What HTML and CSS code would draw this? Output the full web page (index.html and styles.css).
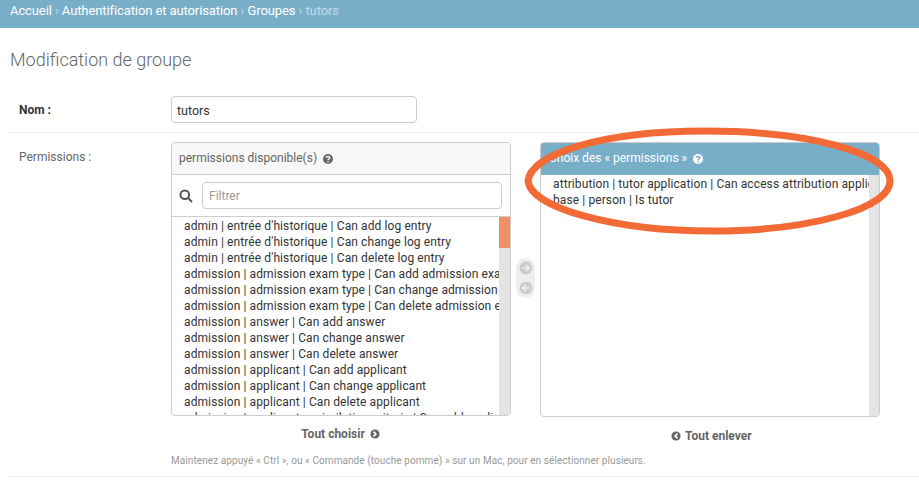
FILE: index.html
```html
<!DOCTYPE html>
<html>
	<head>
		<meta charset="utf-8">
		<title>Modification de groupe</title>
		<link rel="stylesheet" href="styles.css">
	</head>
	<body>
		<div class="breadcrumbs">
			<a>Accueil</a> › <a>Authentification et autorisation</a> › <a>Groupes</a> › tutors
		</div>
		<div class="content">
			<h1>Modification de groupe</h1>
			<div class="form-row">
				<label class="required">Nom :</label>
				<input class="name-input" type="text" value="tutors">
			</div>
			<div class="form-row perm-row">
				<label>Permissions :</label>
				<div class="field">
					<div class="selector">
						<div class="side">
							<div class="box">
								<div class="box-title">permissions disponible(s)
									<svg class="help" viewBox="0 0 12 12"><circle cx="6" cy="6" r="5"/><path d="M4.2 4.8C4.3 2.9 7.8 2.9 7.8 4.8 7.8 6 6 5.9 6 7.2M6 8.2V9.6"/></svg>
								</div>
								<div class="filter">
									<svg class="search" viewBox="0 0 14 14"><circle cx="5.8" cy="5.8" r="4.3"/><path d="M9 9l4 4"/></svg>
									<input class="filter-input" type="text" placeholder="Filtrer">
								</div>
								<div class="list list-left">
									<div class="rows">
										<div>admin | entrée d'historique | Can add log entry</div>
										<div>admin | entrée d'historique | Can change log entry</div>
										<div>admin | entrée d'historique | Can delete log entry</div>
										<div>admission | admission exam type | Can add admission exam type</div>
										<div>admission | admission exam type | Can change admission exam type</div>
										<div>admission | admission exam type | Can delete admission exam type</div>
										<div>admission | answer | Can add answer</div>
										<div>admission | answer | Can change answer</div>
										<div>admission | answer | Can delete answer</div>
										<div>admission | applicant | Can add applicant</div>
										<div>admission | applicant | Can change applicant</div>
										<div>admission | applicant | Can delete applicant</div>
										<div>admission | applicant assimilation criteria | Can add applicant</div>
									</div>
									<div class="scrollbar"><div class="thumb"></div></div>
								</div>
							</div>
							<div class="choose-all">Tout choisir
								<svg class="round-icon" viewBox="0 0 12 12"><circle cx="6" cy="6" r="5.5"/><path d="M4.2 3.2L7 6 4.2 8.8"/></svg>
							</div>
						</div>
						<div class="chooser">
							<svg viewBox="0 0 14 14"><circle cx="7" cy="7" r="6.5"/><path d="M3.5 7H10M7 3.8L10.2 7 7 10.2"/></svg>
							<svg viewBox="0 0 14 14"><circle cx="7" cy="7" r="6.5"/><path d="M10.5 7H4M7 3.8L3.8 7 7 10.2"/></svg>
						</div>
						<div class="side">
							<div class="box box-chosen">
								<div class="box-title title-chosen">Choix des « permissions »
									<svg class="help help-white" viewBox="0 0 12 12"><circle cx="6" cy="6" r="5"/><path d="M4.2 4.8C4.3 2.9 7.8 2.9 7.8 4.8 7.8 6 6 5.9 6 7.2M6 8.2V9.6"/></svg>
								</div>
								<div class="list list-right">
									<div class="rows">
										<div>attribution | tutor application | Can access attribution application</div>
										<div>base | person | Is tutor</div>
									</div>
									<div class="scrollbar"></div>
								</div>
							</div>
							<div class="choose-all remove-all">
								<svg class="round-icon" viewBox="0 0 12 12"><circle cx="6" cy="6" r="5.5"/><path d="M7.8 3.2L5 6 7.8 8.8"/></svg>
								Tout enlever
							</div>
						</div>
					</div>
					<p class="help-text">Maintenez appuyé « Ctrl », ou « Commande (touche pomme) » sur un Mac, pour en sélectionner plusieurs.</p>
				</div>
			</div>
		</div>
		<!-- annotation drawn over the screenshot -->
		<svg class="annotation" viewBox="0 0 919 493">
			<path d="M528 181C531 154 602 131 705 131 808 131 890 153 890 181 890 209 808 231 712 231 615 231 531 208 528 181Z"/>
		</svg>
	</body>
</html>
```

FILE: styles.css
```css
* {
	margin: 0;
	padding: 0;
	box-sizing: border-box;
}
html, body {
	height: 493px;
	overflow: hidden;
}
body {
	font-family: Roboto, "Liberation Sans", sans-serif;
	font-size: 12px;
	color: #333;
	background: #fff;
}
.breadcrumbs {
	height: 28px;
	padding: 0 10px;
	background: #79aec8;
	color: #c4dce8;
	font-size: 13px;
	letter-spacing: -0.1px;
	line-height: 21px;
}
.breadcrumbs a {
	color: #fff;
}
.content {
	padding-left: 10px;
}
h1 {
	height: 58px;
	padding-top: 20px;
	font-size: 18px;
	line-height: 24px;
	font-weight: 300;
	color: #666;
}
.form-row {
	display: flex;
	padding: 10px 0 9px 9px;
	border-bottom: 1px solid #eee;
}
.perm-row {
	padding-top: 9px;
	padding-bottom: 8px;
}
.form-row label {
	width: 152px;
	height: 27px;
	flex: none;
	color: #666;
	font-size: 12px;
	line-height: 29px;
}
.form-row label.required {
	color: #333;
	font-weight: bold;
}
.perm-row label {
	line-height: 30px;
}
input {
	font-family: inherit;
	border: 1px solid #ccc;
	border-radius: 4px;
	background: #fff;
}
.name-input {
	width: 246px;
	height: 27px;
	padding: 2px 5px 0;
	font-size: 12.5px;
	color: #333;
}
.selector {
	display: flex;
}
.side {
	width: 340px;
	flex: none;
}
.box {
	height: 274px;
	display: flex;
	flex-direction: column;
	border: 1px solid #ccc;
	border-radius: 4px;
	overflow: hidden;
}
.box-chosen {
	height: 275px;
}
.box-title {
	height: 32px;
	flex: none;
	padding-left: 7px;
	background: #f8f8f8;
	border-bottom: 1px solid #ccc;
	color: #666;
	font-size: 12px;
	line-height: 31px;
}
.title-chosen {
	background: #79aec8;
	border-bottom: none;
	color: #fff;
	padding-left: 8px;
}
.help {
	width: 12px;
	height: 12px;
	margin-left: 2px;
	vertical-align: -3px;
}
.help circle {
	fill: #666;
}
.help path {
	fill: none;
	stroke: #f8f8f8;
	stroke-width: 1.5;
}
.help-white circle {
	fill: #fff;
}
.help-white path {
	stroke: #79aec8;
}
.filter {
	height: 42px;
	flex: none;
	display: flex;
	align-items: center;
	padding: 0 8px 0 7px;
	border-bottom: 1px solid #ccc;
}
.search {
	width: 14px;
	height: 14px;
	margin-right: 9px;
	flex: none;
}
.search circle, .search path {
	fill: none;
	stroke: #555;
	stroke-width: 2;
}
.filter-input {
	flex: 1;
	height: 27px;
	padding: 0 6px;
	font-size: 12px;
}
.filter-input::placeholder {
	color: #999;
}
.list {
	flex: 1;
	display: flex;
	min-height: 0;
}
.rows {
	flex: 1;
	min-width: 0;
	overflow: hidden;
	white-space: nowrap;
	padding: 1px 0 0 12px;
	font-size: 12px;
	letter-spacing: 0.1px;
	line-height: 16px;
}
.scrollbar {
	width: 11px;
	flex: none;
	background: #e4e4e4;
}
.list-right .scrollbar {
	width: 10px;
}
.thumb {
	height: 31px;
	background: #f08f68;
}
.choose-all {
	padding-top: 10px;
	text-align: center;
	color: #666;
	font-size: 12px;
	font-weight: bold;
	line-height: 16px;
}
.remove-all {
	padding: 11px 0 0 2px;
}
.round-icon {
	width: 10px;
	height: 10px;
	margin: 0 1px 0 2px;
	vertical-align: -1px;
}
.remove-all .round-icon {
	margin: 0 1px;
}
.round-icon circle {
	fill: #666;
}
.round-icon path {
	fill: none;
	stroke: #fff;
	stroke-width: 2;
}
.chooser {
	width: 19px;
	height: 40px;
	margin: 116px 5px 0;
	flex: none;
	display: flex;
	flex-direction: column;
	align-items: center;
	justify-content: space-around;
	background: #eee;
	border-radius: 10px;
}
.chooser svg {
	width: 14px;
	height: 14px;
}
.chooser circle {
	fill: #ccc;
}
.chooser path {
	fill: none;
	stroke: #eee;
	stroke-width: 1.6;
}
.help-text {
	padding-top: 9px;
	font-size: 10px;
	letter-spacing: 0.08px;
	line-height: 15px;
	color: #999;
}
.annotation {
	position: absolute;
	left: 0;
	top: 0;
	width: 919px;
	height: 493px;
	pointer-events: none;
}
.annotation path {
	fill: none;
	stroke: #f26b36;
	stroke-width: 7;
}
```
